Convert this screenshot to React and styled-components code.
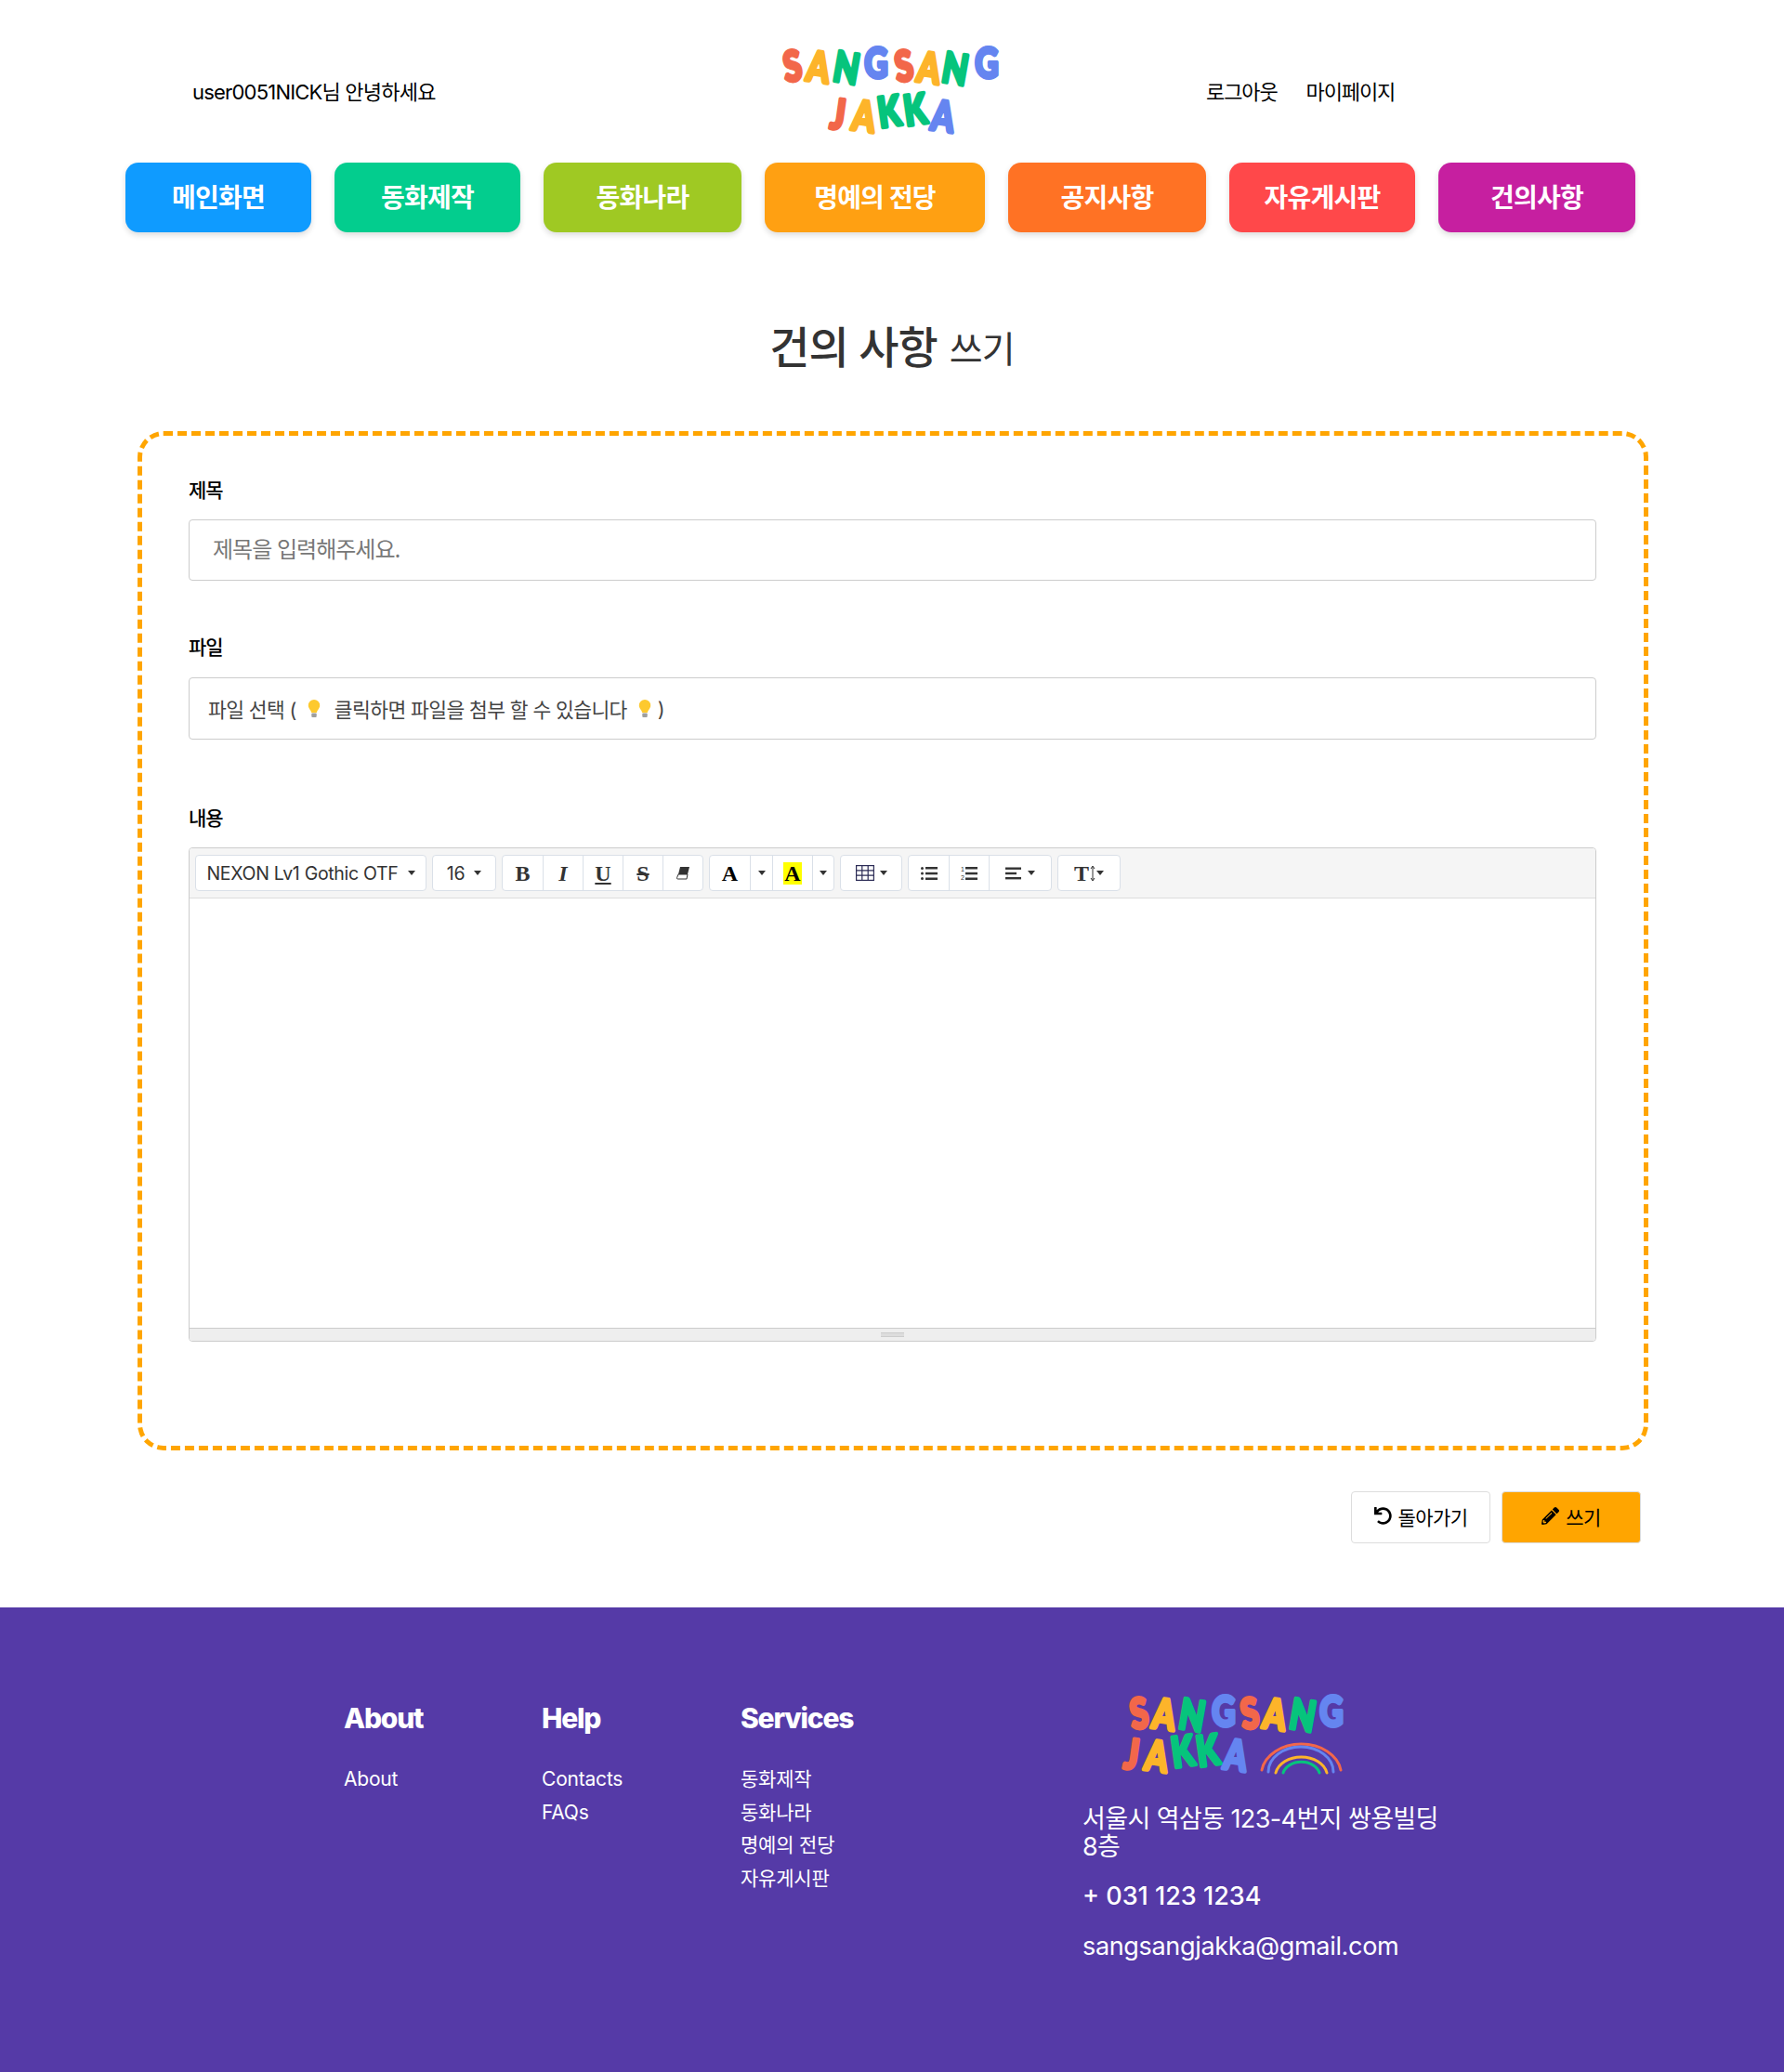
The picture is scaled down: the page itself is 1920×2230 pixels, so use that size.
import React from "react";
import styled, { createGlobalStyle } from "styled-components";
import { FaUndo, FaPencilAlt } from "react-icons/fa";

const KR = `Inter, "Noto Sans CJK KR", sans-serif`;

const Global = createGlobalStyle`
  html, body { margin: 0; padding: 0; background: #fff; }
  body { font-family: ${KR}; color: #000; }
  * { box-sizing: border-box; }
`;

const Page = styled.div`width: 1920px; height: 2230px; display: flex; flex-direction: column;`;
const Header = styled.header`height: 175px; display: flex; align-items: center; padding-left: 207px;`;
const Greeting = styled.div`width: 593px; font-size: 22px; letter-spacing: -0.8px; margin-top: 18px;`;
const HeaderLinks = styled.div`display: flex; gap: 31px; margin-left: 198px; font-size: 22px; letter-spacing: -1.1px; margin-top: 18px;`;
const Nav = styled.nav`display: flex; gap: 25px; padding-left: 135px;`;
const NavItem = styled.a`
  width: ${p => p.$w}px; height: 75px; border-radius: 14px; background: ${p => p.$c};
  color: #fff; font-size: 28px; font-weight: 700; letter-spacing: -0.8px; padding-bottom: 4px;
  display: flex; align-items: center; justify-content: center;
  box-shadow: 0 3px 6px rgba(0,0,0,.14);
`;
const Title = styled.h1`
  margin: 0; height: 214px; display: flex; align-items: center; justify-content: center; gap: 13px;
  font-size: 47px; font-weight: 500; color: #333; letter-spacing: -1px; padding-top: 27px;
  small { font-size: 39px; font-weight: 400; margin-top: 4px; }
`;
const Card = styled.section`
  width: 1626px; height: 1097px; margin-left: 148px; border: 5px dashed #ffa500; border-radius: 28px;
  padding: 44px 51px 0 50px; display: flex; flex-direction: column;
`;
const Label = styled.label`display: block; height: 30px; line-height: 30px; font-size: 21px; font-weight: 500; letter-spacing: -1px;`;
const Field = styled.div`margin-bottom: ${p => p.$mb}px;`;
const TextBox = styled.div`
  margin-top: ${p => p.$mt}px; height: ${p => p.$h}px; border: 1px solid #ccc; border-radius: 4px;
  display: flex; align-items: center; padding: 0 0 ${p => p.$pb}px ${p => p.$pl}px; color: ${p => p.$c};
  font-size: ${p => p.$fs}px; letter-spacing: ${p => p.$ls}px;
`;
const Bulb = styled.svg`width: 16px; height: 22px; margin: 0 ${p => p.$r}px 0 ${p => p.$l}px;`;
const Editor = styled.div`margin-top: 16px; height: 532px; border: 1px solid #ccc; border-radius: 4px; display: flex; flex-direction: column;`;
const Toolbar = styled.div`
  height: 54px; background: #f5f5f5; border-bottom: 1px solid #ddd; padding: 7px 6px 0;
  display: flex; gap: 6px; align-items: flex-start; border-radius: 3px 3px 0 0;
`;
const Group = styled.div`
  display: flex; height: 39px; background: #fff; border: 1px solid #dae0e8; border-radius: 4px;
`;
const Tool = styled.div`
  width: ${p => p.$w}px; height: 100%; display: flex; align-items: center; justify-content: center; gap: ${p => p.$g || 0}px;
  color: #333; font-size: 18px; border-left: ${p => p.$first ? 0 : "1px solid #dae0e8"};
`;
const Glyph = styled.span`
  font-family: "Liberation Serif", serif; font-weight: 700; font-size: 24px; line-height: 1; color: ${p => p.$c || "#333"};
  font-style: ${p => p.$i ? "italic" : "normal"};
  text-decoration: ${p => p.$u ? "underline" : p.$s ? "line-through" : "none"};
  background: ${p => p.$bg || "none"};
  padding: ${p => p.$bg ? "0 1px" : 0};
`;
const SelectText = styled.span`font-size: 19.5px; color: #333; letter-spacing: -.3px;`;
const Caret = styled.i`
  display: inline-block; width: 0; height: 0; border-left: 4px solid transparent; border-right: 4px solid transparent; border-top: 5px solid #333;
`;
const EditArea = styled.div`flex: 1;`;
const Status = styled.div`
  height: 14px; background: #eee; border-top: 1px solid #ccc; border-radius: 0 0 3px 3px; display: flex; justify-content: center; align-items: center;
  i { display: block; width: 25px; height: 5px; border-top: 1px solid #ccc; border-bottom: 1px solid #ccc; background: #ddd; }
`;
const Actions = styled.div`display: flex; justify-content: flex-end; gap: 12px; padding: 44px 154px 0 0;`;
const Button = styled.button`
  width: 150px; height: 56px; border: 1px solid #ddd; border-radius: 4px; background: ${p => p.$bg};
  font-family: ${KR}; font-size: 21px; letter-spacing: -0.6px; color: #000; display: flex; align-items: center; justify-content: center; gap: 7px; padding: 0 0 3px;
  svg { font-size: 19px; }
`;
const Footer = styled.footer`
  margin-top: 69px; flex: 1; background: #553aa7; color: #fff; display: flex; padding: 101px 0 0 370px;
`;
const Col = styled.div`width: ${p => p.$w}px;`;
const ColHead = styled.h4`margin: 0 0 30px; font-size: 30px; line-height: 36px; font-weight: 800; letter-spacing: -1.2px;`;
const ColList = styled.ul`list-style: none; margin: 0; padding: 0; display: flex; flex-direction: column; gap: 0;`;
const ColItem = styled.li`height: 35.5px; line-height: 35.5px; font-size: 21px; letter-spacing: -0.2px;`;
const Contact = styled.div`margin-top: -8px; width: 390px;`;
const Address = styled.p`margin: 30px 0 0; font-size: 27px; line-height: 30px; letter-spacing: -0.6px;`;
const Phone = styled.p`margin: 21px 0 0; font-size: 27px; line-height: 34px; font-weight: 500; letter-spacing: 0;`;
const Email = styled.p`margin: 20px 0 0; font-size: 27px; line-height: 34px; letter-spacing: -0.33px;`;
const LogoSvg = styled.svg`display: block; margin-left: ${p => p.$ml}px; margin-top: ${p => p.$mt}px; overflow: visible;`;

const RED = "#f2674a", YEL = "#fdb42a", GRN = "#06c47c", BLU = "#6585f0";

const LogoLetter = ({ ch, x, y, r, c, s }) => (
  <text transform={`translate(${x} ${y}) rotate(${r} 0 ${-s * 0.35}) scale(0.78 1)`} fill={c} stroke={c} strokeWidth={s * 0.09}
    strokeLinejoin="round" textAnchor="middle" fontFamily="Lato, sans-serif" fontWeight="900" fontSize={s}>{ch}</text>
);

const TOP = [["S",53,RED,-8,0],["A",81,YEL,8,1],["N",111,GRN,10,2],["G",143,BLU,0,-3],["S",173,RED,-8,0],["A",200,YEL,8,2],["N",228,GRN,10,3],["G",262,BLU,0,-3]];
const BOT = [["J",102,RED,8,0],["A",130,YEL,8,2],["K",157,GRN,-8,-3],["K",185,GRN,-8,-5],["A",215,BLU,8,2]];

const HeaderLogo = () => (
  <LogoSvg $ml={0} $mt={5} width="300" height="120" viewBox="0 0 300 120">
    {TOP.map(([ch,x,c,r,d],i)=><LogoLetter key={i} ch={ch} x={x} y={57+d} r={r} c={c} s={45}/>)}
    {BOT.map(([ch,x,c,r,d],i)=><LogoLetter key={i} ch={ch} x={x} y={109+d} r={r} c={c} s={45}/>)}
  </LogoSvg>
);

const FT = [["S",25,RED,-8,0],["A",52,YEL,8,1],["N",82,GRN,10,2],["G",116,BLU,0,-2],["S",144,RED,-8,0],["A",171,YEL,8,1],["N",201,GRN,10,2],["G",232,BLU,0,-2]];
const FB = [["J",17,RED,8,0],["A",44,YEL,8,2],["K",72,GRN,-8,-3],["K",99,GRN,-8,-4],["A",129,BLU,8,1]];

const FooterLogo = () => (
  <LogoSvg $ml={36} $mt={0} width="300" height="90" viewBox="0 0 300 90">
    {FT.map(([ch,x,c,r,d],i)=><LogoLetter key={i} ch={ch} x={x} y={37+d} r={r} c={c} s={45}/>)}
    {FB.map(([ch,x,c,r,d],i)=><LogoLetter key={i} ch={ch} x={x} y={81+d} r={r} c={c} s={45}/>)}
    <g fill="none" strokeWidth="3" strokeLinecap="round">
      <path d="M157 82a43 33 0 0 1 85 0" stroke={RED}/>
      <path d="M164 84a35 27 0 0 1 70 0" stroke={BLU}/>
      <path d="M172 85a28 21 0 0 1 55 0" stroke={YEL}/>
      <path d="M180 85a20 15 0 0 1 39 0" stroke={GRN}/>
    </g>
  </LogoSvg>
);

const BulbIcon = ({ l, r }) => (
  <Bulb $l={l} $r={r} viewBox="0 0 16 22">
    <path d="M8 1a6.2 6.2 0 0 0-6.2 6.2c0 3.2 2.6 4.6 3.4 7.8h5.6c.8-3.2 3.4-4.6 3.4-7.8A6.2 6.2 0 0 0 8 1z" fill="#fdc92e"/>
    <rect x="5.3" y="15.5" width="5.4" height="4.5" rx="1" fill="#9e9e9e"/>
  </Bulb>
);

const ListIcon = ({ ordered }) => (
  <svg width="18" height="16" viewBox="0 0 18 16" fill="#333">
    {ordered ? (
      <>
        <text x="0" y="6" fontSize="7" fontFamily="Liberation Sans, sans-serif">1</text>
        <text x="0" y="15" fontSize="7" fontFamily="Liberation Sans, sans-serif">2</text>
      </>
    ) : (
      <>
        <circle cx="1.5" cy="2.5" r="1.5"/><circle cx="1.5" cy="8" r="1.5"/><circle cx="1.5" cy="13.5" r="1.5"/>
      </>
    )}
    <rect x="5" y="1" width="13" height="2.5"/><rect x="5" y="6.8" width="13" height="2.5"/><rect x="5" y="12.5" width="13" height="2.5"/>
  </svg>
);

const AlignIcon = () => (
  <svg width="17" height="14" viewBox="0 0 17 14" fill="#333">
    <rect width="17" height="2.4" y="0.5"/><rect width="12" height="2.4" y="5.8"/><rect width="17" height="2.4" y="11"/>
  </svg>
);

const TableIcon = () => (
  <svg width="20" height="17" viewBox="0 0 20 17" fill="none" stroke="#2b2b55" strokeWidth="1.2">
    <rect x=".6" y=".6" width="18.8" height="15.8"/>
    <path d="M.6 5.8h18.8M.6 11.2h18.8M6.8.6v15.8M13.2.6v15.8"/>
  </svg>
);

const EraserIcon = () => (
  <svg width="15" height="15" viewBox="0 0 15 15">
    <path d="M4 1h10l-2 8H2z" fill="#333"/>
    <path d="M2 9h10l-1 5H1.5a1 1 0 0 1-1-1.2z" fill="#fff" stroke="#333" strokeWidth="1"/>
  </svg>
);

const NAV = [
  ["메인화면",200,"#0f9bff"],["동화제작",200,"#03cd8e"],["동화나라",213,"#9fc923"],["명예의 전당",237,"#ffa012"],
  ["공지사항",213,"#ff7224"],["자유게시판",200,"#ff484a"],["건의사항",212,"#c61fa0"],
];

export default function App() {
  return (
    <Page>
      <Global />
      <Header>
        <Greeting>user0051NICK님 안녕하세요</Greeting>
        <HeaderLogo />
        <HeaderLinks><span>로그아웃</span><span>마이페이지</span></HeaderLinks>
      </Header>
      <Nav>{NAV.map(([t,w,c]) => <NavItem key={t} $w={w} $c={c}>{t}</NavItem>)}</Nav>
      <Title>건의 사항 <small>쓰기</small></Title>
      <Card>
        <Field $mb={57}>
          <Label>제목</Label>
          <TextBox $mt={16} $h={66} $pl={25} $pb={6} $c="#777" $fs={24} $ls={-1}>제목을 입력해주세요.</TextBox>
        </Field>
        <Field $mb={70}>
          <Label>파일</Label>
          <TextBox $mt={17} $h={67} $pl={20} $pb={0} $c="#444" $fs={21.5} $ls={-0.6}>
            파일 선택 (<BulbIcon l={11} r={14}/>클릭하면 파일을 첨부 할 수 있습니다<BulbIcon l={11} r={6}/>)
          </TextBox>
        </Field>
        <Field $mb={0}>
          <Label>내용</Label>
          <Editor>
            <Toolbar>
              <Group><Tool $first $w={247} $g={10}><SelectText>NEXON Lv1 Gothic OTF</SelectText><Caret/></Tool></Group>
              <Group><Tool $first $w={67} $g={10}><SelectText>16</SelectText><Caret/></Tool></Group>
              <Group>
                <Tool $first $w={43}><Glyph>B</Glyph></Tool>
                <Tool $w={43}><Glyph $i>I</Glyph></Tool>
                <Tool $w={43}><Glyph $u>U</Glyph></Tool>
                <Tool $w={43}><Glyph $s>S</Glyph></Tool>
                <Tool $w={43}><EraserIcon/></Tool>
              </Group>
              <Group>
                <Tool $first $w={43}><Glyph $c="#000">A</Glyph></Tool>
                <Tool $w={24}><Caret/></Tool>
                <Tool $w={43}><Glyph $c="#000" $bg="#ff0">A</Glyph></Tool>
                <Tool $w={23}><Caret/></Tool>
              </Group>
              <Group><Tool $first $w={65} $g={6}><TableIcon/><Caret/></Tool></Group>
              <Group>
                <Tool $first $w={43}><ListIcon/></Tool>
                <Tool $w={43}><ListIcon ordered/></Tool>
                <Tool $w={67} $g={7}><AlignIcon/><Caret/></Tool>
              </Group>
              <Group><Tool $first $w={66} $g={1}><Glyph>T</Glyph><svg width="6" height="18" viewBox="0 0 6 18" fill="none" stroke="#333"><path d="M3 2v14M1 4l2-3 2 3M1 14l2 3 2-3"/></svg><Caret/></Tool></Group>
            </Toolbar>
            <EditArea/>
            <Status><i/></Status>
          </Editor>
        </Field>
      </Card>
      <Actions>
        <Button $bg="#fff"><FaUndo/>돌아가기</Button>
        <Button $bg="#ffa500"><FaPencilAlt/>쓰기</Button>
      </Actions>
      <Footer>
        <Col $w={213}>
          <ColHead>About</ColHead>
          <ColList><ColItem>About</ColItem></ColList>
        </Col>
        <Col $w={214}>
          <ColHead>Help</ColHead>
          <ColList><ColItem>Contacts</ColItem><ColItem>FAQs</ColItem></ColList>
        </Col>
        <Col $w={368}>
          <ColHead>Services</ColHead>
          <ColList><ColItem>동화제작</ColItem><ColItem>동화나라</ColItem><ColItem>명예의 전당</ColItem><ColItem>자유게시판</ColItem></ColList>
        </Col>
        <Contact>
          <FooterLogo/>
          <Address>서울시 역삼동 123-4번지 쌍용빌딩<br/>8층</Address>
          <Phone>+ 031 123 1234</Phone>
          <Email>sangsangjakka@gmail.com</Email>
        </Contact>
      </Footer>
    </Page>
  );
}
